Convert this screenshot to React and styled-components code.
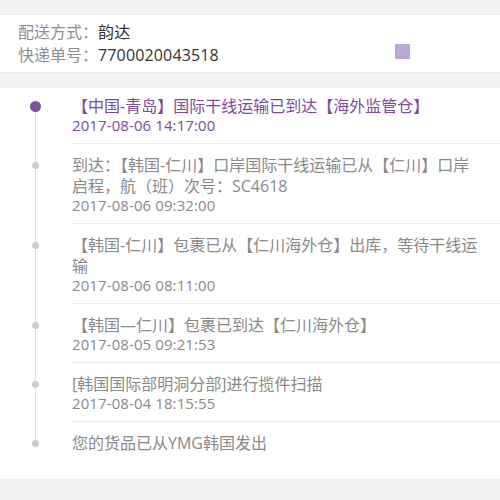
import React from "react";
import styled, { createGlobalStyle } from "styled-components";

const Global = createGlobalStyle`
  html, body { margin: 0; padding: 0; background: #f4f4f6; }
  body { font-family: "Open Sans", "Noto Sans CJK SC", sans-serif; }
`;

const Page = styled.div`
  width: 500px;
  height: 500px;
  background: #f4f4f6;
  padding-top: 14px;
  box-sizing: border-box;
  overflow: hidden;
`;

const InfoBox = styled.div`
  background: #fff;
  height: 59px;
  box-sizing: border-box;
  padding: 6px 0 7px 18px;
  display: flex;
  border-top: 1px solid #efeff1;
  border-bottom: 1px solid #ececee;
`;

const InfoLines = styled.div`
  flex: 1;
  display: flex;
  flex-direction: column;
`;

const InfoLine = styled.div`
  font-size: 16px;
  line-height: 23px;
  height: 23px;
  white-space: nowrap;
`;

const Label = styled.span`
  color: #8e8e8e;
`;

const Value = styled.span`
  color: #333;
  letter-spacing: 0.15px;
`;

const Square = styled.div`
  width: 15px;
  height: 15px;
  background: #bba8d3;
  margin: 23px 90px 0 0;
`;

const Panel = styled.div`
  margin-top: 14px;
  background: #fff;
  height: 393px;
  box-sizing: border-box;
  border-top: 1px solid #efeff1;
  border-bottom: 1px solid #ececee;
`;

const Item = styled.div`
  display: flex;
  align-items: stretch;
`;

const Rail = styled.div`
  width: 70px;
  flex: none;
  display: flex;
  flex-direction: column;
  align-items: center;
`;

const Seg = styled.div`
  width: 1px;
  background: ${(p) => (p.$hidden ? "transparent" : "#dedede")};
  height: ${(p) => (p.$h != null ? `${p.$h}px` : "auto")};
  flex: ${(p) => (p.$h != null ? "none" : "1")};
`;

const Dot = styled.div`
  flex: none;
  width: ${(p) => (p.$active ? 11 : 7)}px;
  height: ${(p) => (p.$active ? 11 : 7)}px;
  border-radius: 50%;
  background: ${(p) => (p.$active ? "#7f519c" : "#cdcdcd")};
`;

const Content = styled.div`
  flex: 1;
  margin-left: 2px;
  padding: ${(p) => p.$top}px 15px ${(p) => p.$bottom}px 0;
  border-bottom: ${(p) => (p.$last ? "none" : "1px solid #ebebeb")};
`;

const Title = styled.div`
  font-size: 16px;
  line-height: 21px;
  color: ${(p) => (p.$active ? "#7e4b9b" : "#8a8a8a")};
`;

const Time = styled.div`
  font-size: 15px;
  line-height: 17px;
  letter-spacing: 0.1px;
  color: ${(p) => (p.$active ? "#7e4b9b" : "#8a8a8a")};
`;

const items = [
  { t: "【中国-青岛】国际干线运输已到达【海外监管仓】", d: "2017-08-06 14:17:00" },
  { t: "到达：【韩国-仁川】口岸国际干线运输已从【仁川】口岸启程，航（班）次号：SC4618", d: "2017-08-06 09:32:00" },
  { t: "【韩国-仁川】包裹已从【仁川海外仓】出库，等待干线运输", d: "2017-08-06 08:11:00" },
  { t: "【韩国—仁川】包裹已到达【仁川海外仓】", d: "2017-08-05 09:21:53" },
  { t: "[韩国国际部明洞分部]进行揽件扫描", d: "2017-08-04 18:15:55" },
  { t: "您的货品已从YMG韩国发出", d: null },
];

export default function App() {
  return (
    <>
      <Global />
      <Page>
        <InfoBox>
          <InfoLines>
            <InfoLine>
              <Label>配送方式：</Label>
              <Value>韵达</Value>
            </InfoLine>
            <InfoLine>
              <Label>快递单号：</Label>
              <Value>7700020043518</Value>
            </InfoLine>
          </InfoLines>
          <Square />
        </InfoBox>
        <Panel>
          {items.map((it, i) => {
            const first = i === 0;
            const last = i === items.length - 1;
            const top = first ? 8 : 11;
            const r = first ? 5.5 : 3.5;
            return (
              <Item key={i}>
                <Rail>
                  <Seg $hidden={first} $h={top + 10.5 - r} />
                  <Dot $active={first} />
                  <Seg $hidden={last} />
                </Rail>
                <Content $top={top} $bottom={last ? 0 : 9} $last={last}>
                  <Title $active={first}>{it.t}</Title>
                  {it.d && <Time $active={first}>{it.d}</Time>}
                </Content>
              </Item>
            );
          })}
        </Panel>
      </Page>
    </>
  );
}
